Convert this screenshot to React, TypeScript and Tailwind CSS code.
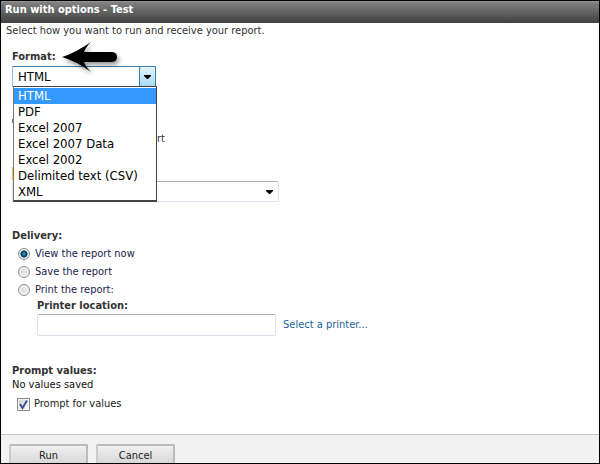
import { useState } from "react";

type Delivery = "view" | "save" | "print";

const formats = ["HTML", "PDF", "Excel 2007", "Excel 2007 Data", "Excel 2002", "Delimited text (CSV)", "XML"];

const deliveries: { id: Delivery, label: string }[] = [
    { id: "view", label: "View the report now" },
    { id: "save", label: "Save the report" },
    { id: "print", label: "Print the report:" },
];

const Caret = () => (
    <svg width="7" height="4" viewBox="0 0 7 4" aria-hidden="true">
        <path d="M0 0h7v1L4 4H3L0 1z" fill="#000" />
    </svg>
);

const Arrow = () => (
    <svg className="relative z-10 overflow-visible drop-shadow-[2px_3px_2px_rgba(0,0,0,0.4)]" width="56" height="30" viewBox="0 0 56 30" aria-hidden="true">
        <path d="M0 15C10 12 20 6 29 0C25 4 23 7 22 10H49Q55 10 55 15Q55 20 49 20H22C23 23 25 26 29 30C20 23 10 18 0 15z" fill="#000" />
    </svg>
);

const FormatSelect = () => {
    const [format, setFormat] = useState("HTML");
    const [open, setOpen] = useState(true);

    const onPick = (name: string) => {
        setFormat(name);
        setOpen(false);
    };

    return (
        <div className="relative w-36">
            <select
                id="format"
                className="block h-[21px] w-full appearance-none border border-[#8cc0dc] border-t-[#3d7bad] bg-white pl-[5px] text-[13px] leading-4 text-black outline-none"
                value={format}
                onChange={e => onPick(e.target.value)}
                onMouseDown={e => { e.preventDefault(); setOpen(!open); }}
            >
                {formats.map(name => <option key={name}>{name}</option>)}
            </select>
            <span className="pointer-events-none absolute right-0 top-0 flex h-[21px] w-[17px] items-center justify-center rounded-xs border border-[#3c7fb1] bg-linear-to-b from-[#e5f4fc] to-[#a8d9f3]">
                <Caret />
            </span>
            {open && (
                <ul role="listbox" aria-label="Format" className="absolute left-px top-5 z-10 w-full border border-b-2 border-[#444] border-l-[#777] bg-white pt-px text-[13px] leading-4 text-black">
                    {formats.map(name => (
                        <li
                            key={name}
                            role="option"
                            aria-selected={name === format}
                            onClick={() => onPick(name)}
                            className={name === format ? "bg-[#3399ff] pl-1 text-white" : "pl-1"}
                        >
                            {name}
                        </li>
                    ))}
                </ul>
            )}
        </div>
    );
};

const App = () => {
    const [delivery, setDelivery] = useState<Delivery>("view");
    const [prompt, setPrompt] = useState(true);

    return (
        <div className="flex min-h-screen flex-col border border-black bg-white font-['DejaVu_Sans_Condensed',sans-serif] text-[11px] leading-4 text-[#333]">
            <header className="h-[22px] border-t border-[#929292] bg-linear-to-b from-[#838383] to-[#404040] pl-1">
                <h1 className="font-bold text-white">Run with options - Test</h1>
            </header>
            <main className="flex-1 pl-[11px]">
                <p className="-ml-1.5">Select how you want to run and receive your report.</p>

                <div className="mt-[3px] flex h-6 items-start gap-1.5">
                    <label htmlFor="format" className="pt-[7px] font-bold">Format:</label>
                    <Arrow />
                </div>
                <FormatSelect />
                <div className="mt-8 h-1 w-1 bg-[#c66a3a]" />
                <p className="mt-2 pl-[145px]">rt</p>
                <div className="mt-5 h-[13px] w-1 bg-[#ffb84d]" />
                <div className="relative mt-px max-w-[267px]">
                    <select aria-label="Paper size" className="block h-[21px] w-full appearance-none rounded-xs border border-[#dde3ec] border-t-[#b4b4b4] bg-white outline-none" />
                    <span className="pointer-events-none absolute inset-y-0 right-1.5 flex items-center">
                        <Caret />
                    </span>
                </div>

                <fieldset className="mt-[26px]">
                    <legend className="font-bold">Delivery:</legend>
                    {deliveries.map(({ id, label }) => (
                        <label key={id} className="mt-0.5 flex items-center gap-[5px] pl-1.5 text-[#1c1c4c]">
                            <input
                                type="radio"
                                name="delivery"
                                checked={delivery === id}
                                onChange={() => setDelivery(id)}
                                className="h-3 w-3 appearance-none rounded-full border border-[#8c8f91] bg-[linear-gradient(135deg,#c8cbcf,#fafafa)] ring-inset ring-2 ring-[#f2f2f2] checked:bg-[radial-gradient(circle_at_center,#4fb4e0_0,#126a9c_20%,#0b2d49_45%,#e9edf0_55%)] checked:ring-0"
                            />
                            {label}
                        </label>
                    ))}
                </fieldset>
                <div className="pl-[25px]">
                    <label htmlFor="printer" className="block font-bold">Printer location:</label>
                    <div className="flex items-center gap-[7px]">
                        <input id="printer" type="text" className="h-[22px] w-[239px] rounded-xs border border-[#dde1ec] border-t-[#b4b4b4] px-1 outline-none" />
                        <a href="#" className="text-[#1a6296]">Select a printer...</a>
                    </div>
                </div>

                <section className="mt-7">
                    <h2 className="font-bold leading-[14px]">Prompt values:</h2>
                    <p className="leading-[14px] text-[#111]">No values saved</p>
                    <label className="mt-1 flex items-center gap-1 pl-[5px] text-[#222]">
                        <span className="relative h-[13px] w-[13px]">
                            <input
                                type="checkbox"
                                checked={prompt}
                                onChange={e => setPrompt(e.target.checked)}
                                className="block h-[13px] w-[13px] appearance-none border border-[#8a8c8e] bg-linear-to-br from-[#ccd0d5] to-white ring-1 ring-inset ring-[#f4f4f4]"
                            />
                            {prompt && (
                                <svg className="pointer-events-none absolute inset-0" width="13" height="13" viewBox="0 0 13 13" aria-hidden="true">
                                    <path d="M3 6l2.5 4L10 2.5" fill="none" stroke="#3d5599" strokeWidth="2" />
                                </svg>
                            )}
                        </span>
                        Prompt for values
                    </label>
                </section>
            </main>
            <footer className="flex h-[29px] gap-2 overflow-hidden border-t border-[#c4c4c4] bg-[#f2f2f2] pl-2 pt-[9px]">
                <button className="h-6 w-[79px] rounded-xs border-2 border-[#bbb] border-l-[#ccc] bg-linear-to-b from-[#f0f0f0] to-[#d4d4d4] text-[#222]">Run</button>
                <button className="h-6 w-[79px] rounded-xs border-2 border-[#bbb] border-l-[#ccc] bg-linear-to-b from-[#f0f0f0] to-[#d4d4d4] text-[#222]">Cancel</button>
            </footer>
        </div>
    );
};

export default App;
